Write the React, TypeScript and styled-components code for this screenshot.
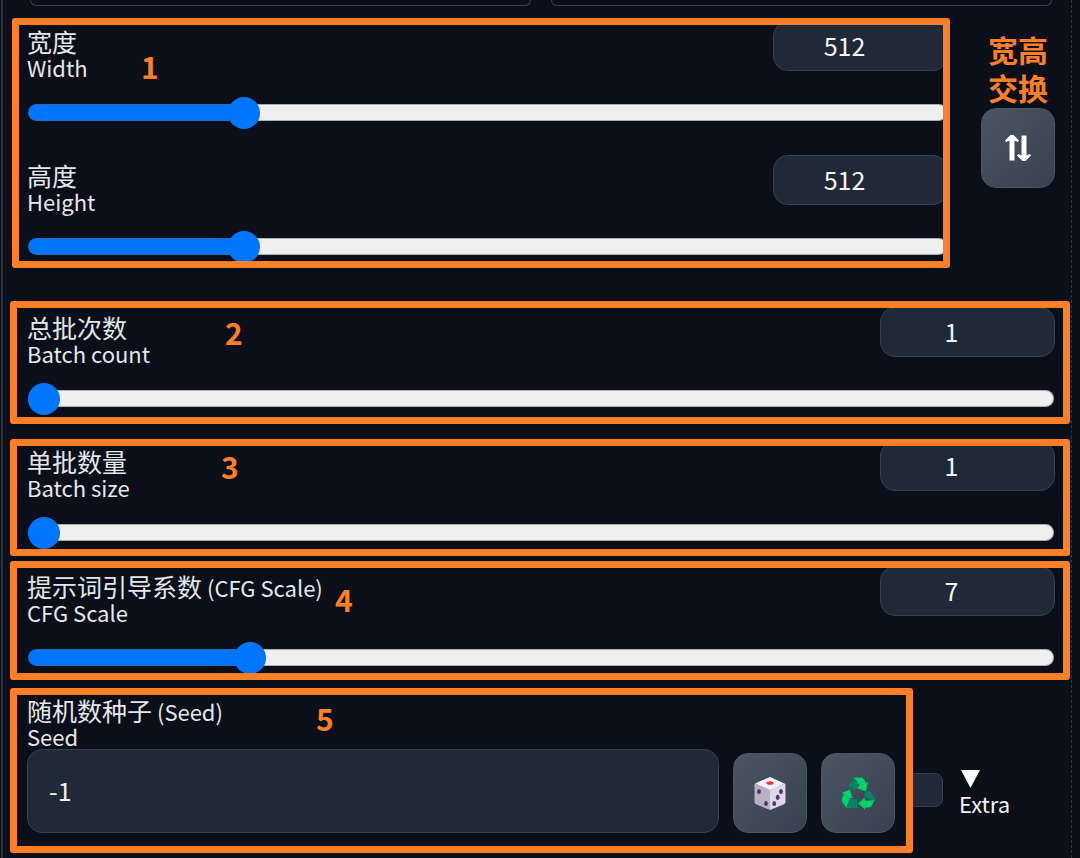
import React, { useId, useState } from "react";
import styled, { createGlobalStyle } from "styled-components";

const ORANGE = "#ff7f27";

const GlobalStyle = createGlobalStyle`
  * { box-sizing: border-box; }
  body {
    margin: 0;
    background: #0b0f19;
    color: #e5e7eb;
    font-family: "Noto Sans CJK SC", "Noto Sans", sans-serif;
    font-size: 25px;
    line-height: 25px;
  }
  button, input { font: inherit; color: inherit; }
`;

const Panel = styled.main`
  margin: 0 8px 0 1px;
  padding: 0 1px 5px 7px;
  border-left: 2px solid #2b3340;
  border-right: 1px dashed #2f3541;
  overflow: hidden;
`;

const TopFields = styled.div`
  display: grid;
  grid-template-columns: 1fr 1fr;
  gap: 20px;
  padding: 0 18px 0 20px;
`;

const FieldEdge = styled.div`
  height: 6px;
  border: 1px solid #374151;
  border-top: 0;
  border-radius: 0 0 14px 14px;
`;

const SizeRow = styled.div`
  display: flex;
  align-items: flex-start;
  gap: 31px;
  margin-top: 12px;
  padding: 0 15px 0 2px;
`;

const SeedRow = styled.div`
  display: flex;
  align-items: flex-start;
  margin-top: 8px;
`;

const Frame = styled.section<{ $pad: string; $top?: number; $grow?: boolean }>`
  position: relative;
  flex: ${(p) => (p.$grow ? "1" : "none")};
  min-width: 0;
  margin-top: ${(p) => p.$top ?? 0}px;
  padding: ${(p) => p.$pad};
  &::after {
    content: "";
    position: absolute;
    inset: 0;
    border: 7px solid ${ORANGE};
    border-radius: 3px;
    pointer-events: none;
  }
`;

const Mark = styled.span<{ $x: number; $y: number }>`
  position: absolute;
  left: ${(p) => p.$x}px;
  top: ${(p) => p.$y}px;
  color: ${ORANGE};
  font: 700 30px/30px "Noto Sans CJK SC", "Noto Sans", sans-serif;
`;

const Control = styled.div`
  & + & { margin-top: 26px; }
`;

const ControlHead = styled.div`
  display: flex;
  justify-content: space-between;
  align-items: flex-start;
  height: 60px;
`;

const Label = styled.label`
  display: block;
  padding-top: 8px;
`;

const LabelLine = styled.span`
  display: block;
  height: 25px;
  white-space: nowrap;
`;

const Latin = styled.span`
  font-size: 22px;
`;

const NumberBox = styled.input`
  width: 175px;
  height: 50px;
  padding: 0 32px 2px 0;
  border: 1px solid #374151;
  border-radius: 15px;
  background: #1f2937;
  color: #f3f4f6;
  text-align: center;
  outline: none;
`;

const Range = styled.input<{ $ratio: number }>`
  appearance: none;
  display: block;
  width: calc(100% - 2px);
  height: 33px;
  margin: 15px 1px 0;
  background: none;
  outline: none;
  &::-webkit-slider-runnable-track {
    height: 17px;
    border-radius: 9px;
    background: linear-gradient(#0075ff, #0075ff) 0 0 /
      calc(16px + (100% - 32px) * ${(p) => p.$ratio}) 100% no-repeat #efefef;
    box-shadow: inset 0 0 0 1px rgba(90, 90, 90, 0.45);
  }
  &::-webkit-slider-thumb {
    appearance: none;
    width: 32px;
    height: 32px;
    margin-top: -7px;
    border-radius: 50%;
    background: #0075ff;
  }
`;

const SwapColumn = styled.div`
  display: flex;
  flex-direction: column;
  align-items: center;
  padding-top: 12px;
`;

const SwapNote = styled.p`
  margin: 0 0 2px;
  color: ${ORANGE};
  font-size: 30px;
  font-weight: 700;
  line-height: 38px;
  text-align: center;
`;

const ToolButton = styled.button`
  display: flex;
  align-items: center;
  justify-content: center;
  width: 74px;
  height: 80px;
  padding: 0;
  border: 1px solid #4b5563;
  border-radius: 15px;
  background: linear-gradient(to bottom right, #4b5563, #374151);
`;

const SeedLabel = styled.label`
  display: block;
  margin-bottom: 1px;
`;

const SeedControls = styled.div`
  display: flex;
  align-items: flex-end;
  gap: 14px;
`;

const SeedInput = styled.input`
  flex: 1;
  min-width: 0;
  height: 84px;
  padding: 0 21px 2px;
  border: 1px solid #374151;
  border-radius: 15px;
  background: #1f2937;
  color: #f3f4f6;
  outline: none;
`;

const Extra = styled.label`
  display: flex;
  align-items: center;
  width: 157px;
  margin-top: 76px;
`;

const ExtraBox = styled.input`
  appearance: none;
  flex: none;
  width: 35px;
  height: 34px;
  margin: 0 16px 0 -5px;
  border: 1px solid #374151;
  border-radius: 8px;
  background: #1f2937;
`;

const ExtraText = styled.span`
  padding-top: 6px;
  color: #f3f4f6;
`;

const Triangle = styled.svg`
  display: block;
  margin: 0 0 2px 2px;
`;

type SliderProps = {
  zh: string;
  suffix?: string;
  en: string;
  min: number;
  max: number;
  initial: number;
};

function SliderControl({ zh, suffix, en, min, max, initial }: SliderProps) {
  const id = useId();
  const [value, setValue] = useState(initial);
  const change = (e: React.ChangeEvent<HTMLInputElement>) => setValue(Number(e.target.value));
  return (
    <Control>
      <ControlHead>
        <Label htmlFor={id}>
          <LabelLine>
            {zh}
            {suffix && <Latin> {suffix}</Latin>}
          </LabelLine>
          <LabelLine>
            <Latin>{en}</Latin>
          </LabelLine>
        </Label>
        <NumberBox id={id} inputMode="numeric" value={value} onChange={change} />
      </ControlHead>
      <Range
        type="range"
        aria-label={en}
        min={min}
        max={max}
        value={value}
        onChange={change}
        $ratio={(value - min) / (max - min)}
      />
    </Control>
  );
}

const SwapIcon = () => (
  <svg width="26" height="26" viewBox="0 0 26 26" fill="#fff" aria-hidden="true">
    <path d="M5.500 0H8.500L14 5.500 12.500 7 9.500 5.500V25.500H4.500V5.500L1.500 7 0 5.500Z" />
    <path d="M17.500 26H20.500L26 20.500 24.500 19 21.500 20.500V.5H16.500V20.500L13.500 19 12 20.500Z" />
  </svg>
);

const DiceIcon = () => (
  <svg width="34" height="36" viewBox="0 0 34 36" aria-hidden="true">
    <path d="M17 2 31.500 8.500 17 15.500 2 8.500Z" fill="#f6eff9" />
    <path d="M2 8.500Q1.500 8.500 1.500 10V27Q1.500 28.500 3 29.200L17 35V15Z" fill="#b9b1c3" />
    <path d="M31.500 8.500Q32.500 8.500 32.500 10V27Q32.500 28.500 31 29.200L17 35V15Z" fill="#e0d6ea" />
    <ellipse cx="17" cy="8" rx="3.6" ry="1.8" fill="#f8312f" />
    <g fill="#433b6b">
      <ellipse cx="6" cy="16.5" rx="1.9" ry="2.6" />
      <ellipse cx="13" cy="28.5" rx="1.9" ry="2.6" />
      <ellipse cx="28" cy="16.5" rx="1.9" ry="2.6" />
      <ellipse cx="24.7" cy="22.3" rx="1.9" ry="2.6" />
      <ellipse cx="21.2" cy="28.5" rx="1.9" ry="2.6" />
    </g>
  </svg>
);

const RecycleIcon = () => (
  <svg width="34" height="34" viewBox="0 0 34 34" aria-hidden="true">
    <g fill="#008463">
      <path d="M12.500 1.500 18 7 14 14.500 7 11Z" />
      <path d="M29.500 15 33.800 22.500Q34 25 31 25L23 20.500 24 15.500Z" />
      <path d="M4.500 32Q3.500 31 5 29L9 23H16V32Z" />
    </g>
    <g fill="#00d26a">
      <path d="M12.500 1.500H20Q22 1.500 23.500 4L24.800 7 27 6 25 15.500 15.500 12 18.500 10 16 5Z" />
      <path d="M33.800 23.500 30.500 30Q29.500 31.500 27.500 31.500H24V33.500L17 27.500 24 21.500V24.500H31Z" />
      <path d="M5 31.500 1 25.500Q0 23.500 1.500 21L3 18.500 .8 17 9 13.500 11.500 22 9 22Z" />
    </g>
  </svg>
);

export default function App() {
  return (
    <>
      <GlobalStyle />
      <Panel>
        <TopFields>
          <FieldEdge />
          <FieldEdge />
        </TopFields>

        <SizeRow>
          <Frame $grow $pad="3px 2px 5px 15px">
            <SliderControl zh="宽度" en="Width" min={64} max={2048} initial={512} />
            <SliderControl zh="高度" en="Height" min={64} max={2048} initial={512} />
            <Mark $x={129} $y={33}>1</Mark>
          </Frame>
          <SwapColumn>
            <SwapNote>
              宽高
              <br />
              交换
            </SwapNote>
            <ToolButton type="button" aria-label="Swap width and height">
              <SwapIcon />
            </ToolButton>
          </SwapColumn>
        </SizeRow>

        <Frame $top={33} $pad="6px 15px 9px 17px">
          <SliderControl zh="总批次数" en="Batch count" min={1} max={100} initial={1} />
          <Mark $x={215} $y={16}>2</Mark>
        </Frame>
        <Frame $top={15} $pad="2px 15px 7px 17px">
          <SliderControl zh="单批数量" en="Batch size" min={1} max={8} initial={1} />
          <Mark $x={211} $y={12}>3</Mark>
        </Frame>
        <Frame $top={5} $pad="5px 15px 6px 17px">
          <SliderControl
            zh="提示词引导系数"
            suffix="(CFG Scale)"
            en="CFG Scale"
            min={1}
            max={30}
            initial={7}
          />
          <Mark $x={325} $y={23}>4</Mark>
        </Frame>

        <SeedRow>
          <Frame $grow $pad="10px 18px 20px 17px">
            <SeedLabel htmlFor="seed">
              <LabelLine>
                随机数种子<Latin> (Seed)</Latin>
              </LabelLine>
              <LabelLine>
                <Latin>Seed</Latin>
              </LabelLine>
            </SeedLabel>
            <SeedControls>
              <SeedInput id="seed" defaultValue="-1" />
              <ToolButton type="button" aria-label="Random seed">
                <DiceIcon />
              </ToolButton>
              <ToolButton type="button" aria-label="Reuse last seed">
                <RecycleIcon />
              </ToolButton>
            </SeedControls>
            <Mark $x={306} $y={15}>5</Mark>
          </Frame>
          <Extra>
            <ExtraBox type="checkbox" />
            <ExtraText>
              <Triangle width="19" height="18" viewBox="0 0 19 18" aria-hidden="true">
                <path d="M0 0H19L9.500 18Z" fill="#f9fafb" />
              </Triangle>
              <LabelLine>
                <Latin>Extra</Latin>
              </LabelLine>
            </ExtraText>
          </Extra>
        </SeedRow>
      </Panel>
    </>
  );
}
